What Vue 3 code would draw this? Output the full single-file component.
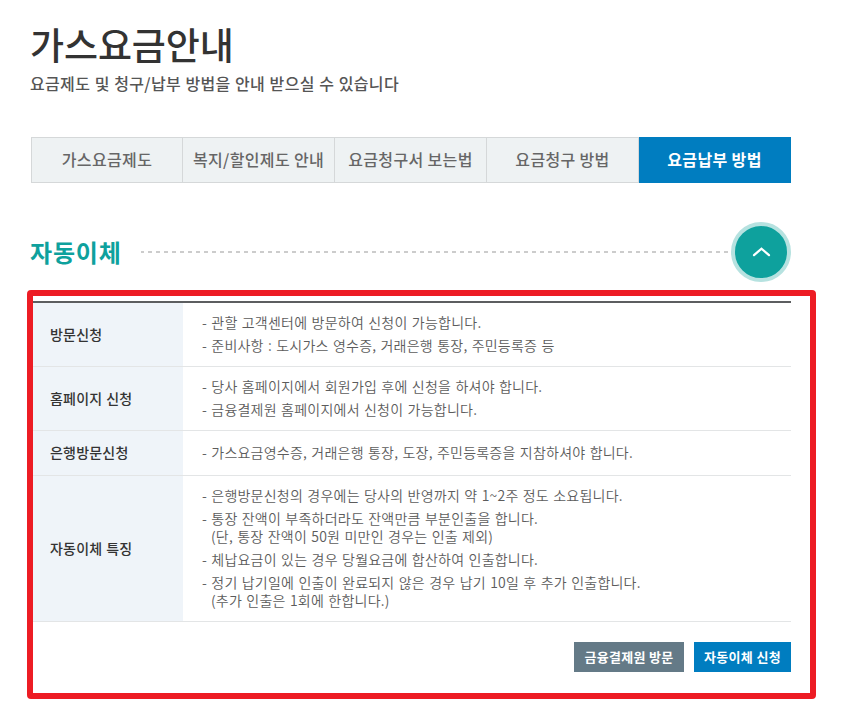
<template>
  <div class="page">
    <h1 class="title">가스요금안내</h1>
    <p class="desc">요금제도 및 청구/납부 방법을 안내 받으실 수 있습니다</p>

    <ul class="tabs">
      <li v-for="(tab, i) in tabs" :key="tab" :class="{ on: current === i }" @click="current = i">{{ tab }}</li>
    </ul>

    <div class="section-head">
      <h2>자동이체</h2>
      <span class="dots"></span>
      <button class="toggle" @click="isOpen = !isOpen">
        <svg viewBox="0 0 20 12" width="20" height="12">
          <path d="M3 9.2 L10.5 2.7 L18 9.2" />
        </svg>
      </button>
    </div>

    <div v-if="isOpen" class="panel">
      <table>
        <tbody>
          <tr v-for="row in rows" :key="row.name">
            <th>{{ row.name }}</th>
            <td>
              <ul>
                <li v-for="item in row.items" :key="item.text">
                  - {{ item.text }}
                  <span v-if="item.sub" class="sub">{{ item.sub }}</span>
                </li>
              </ul>
            </td>
          </tr>
        </tbody>
      </table>
      <div class="btns">
        <button class="gray">금융결제원 방문</button>
        <button class="blue">자동이체 신청</button>
      </div>
    </div>
  </div>
</template>

<script setup>
import { ref } from "vue"

const current = ref(4)
const isOpen = ref(true)
const tabs = ["가스요금제도", "복지/할인제도 안내", "요금청구서 보는법", "요금청구 방법", "요금납부 방법"]

const rows = [
  {
    name: "방문신청",
    items: [
      { text: "관할 고객센터에 방문하여 신청이 가능합니다." },
      { text: "준비사항 : 도시가스 영수증, 거래은행 통장, 주민등록증 등" }
    ]
  },
  {
    name: "홈페이지 신청",
    items: [
      { text: "당사 홈페이지에서 회원가입 후에 신청을 하셔야 합니다." },
      { text: "금융결제원 홈페이지에서 신청이 가능합니다." }
    ]
  },
  {
    name: "은행방문신청",
    items: [{ text: "가스요금영수증, 거래은행 통장, 도장, 주민등록증을 지참하셔야 합니다." }]
  },
  {
    name: "자동이체 특징",
    items: [
      { text: "은행방문신청의 경우에는 당사의 반영까지 약 1~2주 정도 소요됩니다." },
      {
        text: "통장 잔액이 부족하더라도 잔액만큼 부분인출을 합니다.",
        sub: "(단, 통장 잔액이 50원 미만인 경우는 인출 제외)"
      },
      { text: "체납요금이 있는 경우 당월요금에 합산하여 인출합니다." },
      {
        text: "정기 납기일에 인출이 완료되지 않은 경우 납기 10일 후 추가 인출합니다.",
        sub: "(추가 인출은 1회에 한합니다.)"
      }
    ]
  }
]
</script>

<style>
body {
  margin: 0;
  background: #fff;
}
</style>

<style scoped>
.page {
  box-sizing: border-box;
  width: 866px;
  height: 717px;
  padding: 19px 0 0 31px;
  overflow: hidden;
  font-family: "Noto Sans CJK KR", "Noto Sans", sans-serif;
  white-space: nowrap;
}
h1, h2, p, ul {
  margin: 0;
  padding: 0;
}
li {
  list-style: none;
}
button {
  border: 0;
  padding: 0;
  font-family: inherit;
}
.title {
  height: 50px;
  margin-left: -1px;
  line-height: 50px;
  font-size: 37px;
  font-weight: 500;
  letter-spacing: -0.1px;
  color: #333;
}
.desc {
  height: 28px;
  margin-left: -1px;
  line-height: 28px;
  font-size: 16px;
  font-weight: 500;
  color: #555;
  letter-spacing: 0.34px;
  word-spacing: 0.5px;
}
.tabs {
  display: flex;
  width: 760px;
  margin-top: 40px;
}
.tabs li {
  box-sizing: border-box;
  width: 152px;
  height: 46px;
  line-height: 42px;
  border: 1px solid #d5d8d9;
  border-left: 0;
  background: #eef2f3;
  color: #666;
  font-size: 16px;
  font-weight: 500;
  letter-spacing: 0.35px;
  text-align: center;
}
.tabs li:first-child {
  border-left: 1px solid #d5d8d9;
}
.tabs li.on {
  background: #007dc0;
  border-color: #007dc0;
  color: #fff;
  font-weight: 700;
}
.section-head {
  display: flex;
  align-items: center;
  width: 760px;
  height: 60px;
  margin-top: 39px;
}
.section-head h2 {
  width: 110px;
  margin-left: -1px;
  line-height: 60px;
  font-size: 24px;
  font-weight: 700;
  letter-spacing: 0.8px;
  color: #0ea19d;
}
.dots {
  flex: 1;
  height: 2px;
  margin-left: 1px;
  background: repeating-linear-gradient(90deg, #ccc 0 3px, transparent 3px 7px, #ccc 7px 8px);
}
.toggle {
  display: flex;
  align-items: center;
  justify-content: center;
  box-sizing: border-box;
  width: 60px;
  height: 60px;
  border: 4px solid #b6e2e0;
  border-radius: 50%;
  background: #0ea19d;
}
.toggle path {
  fill: none;
  stroke: #fff;
  stroke-width: 2.2;
  stroke-linecap: round;
}
.panel {
  box-sizing: border-box;
  width: 789px;
  height: 409px;
  margin: 8px 0 0 -4px;
  padding: 5px 19px 0 0;
  border: 6px solid #ed1c24;
  border-radius: 4px;
}
table {
  width: 758px;
  border-top: 2px solid #5c5e60;
  border-spacing: 0;
}
th, td {
  padding: 10px 0 12px;
  border-bottom: 1px solid #e3e5e6;
  text-align: left;
}
th {
  width: 133px;
  padding-left: 17px;
  background: #eff4f9;
  color: #333;
  font-size: 14px;
  font-weight: 500;
  line-height: 22px;
  letter-spacing: 0.2px;
  word-spacing: 0.5px;
}
td {
  padding-left: 19px;
  color: #5c5c5c;
  font-size: 14px;
  font-weight: 350;
  line-height: 18px;
  letter-spacing: 0.23px;
  word-spacing: 0.9px;
}
td li + li {
  margin-top: 5px;
}
.sub {
  display: block;
  padding-left: 9px;
}
.btns {
  display: flex;
  justify-content: flex-end;
  gap: 10px;
  width: 758px;
  margin-top: 20px;
}
.btns button {
  width: 110px;
  height: 30px;
  padding-bottom: 1px;
  color: #fff;
  font-size: 13px;
  font-weight: 700;
  letter-spacing: 0.3px;
}
.btns .gray {
  background: #647a87;
}
.btns .blue {
  width: 97px;
  background: #007dc0;
}
</style>
